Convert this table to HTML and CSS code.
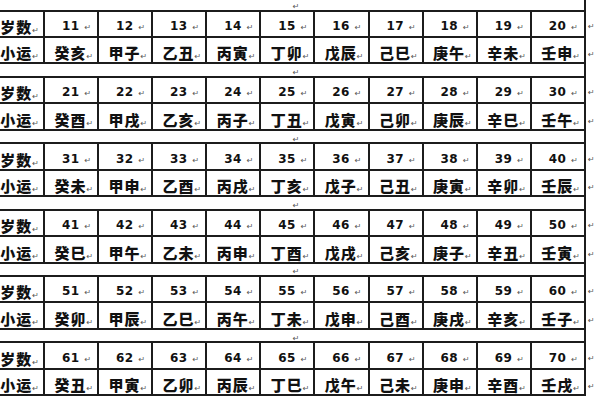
FILE: index.html
```html
<!DOCTYPE html>
<html lang="zh-CN">
<head>
<meta charset="utf-8">
<title>小运表</title>
<link rel="stylesheet" href="styles.css">
</head>
<body>
<table class="yun">
<colgroup>
<col class="c-label"><col class="c-d"><col class="c-d"><col class="c-d"><col class="c-d"><col class="c-d"><col class="c-d"><col class="c-d"><col class="c-d"><col class="c-d"><col class="c-d"><col class="c-eol">
</colgroup>
<tbody>
<tr class="gap"><td colspan="11"><span class="pm">↵</span></td><td class="eol"></td></tr>
<tr class="age"><td class="lb">岁数<span class="pm">↵</span></td><td>11<span class="pm">↵</span></td><td>12<span class="pm">↵</span></td><td>13<span class="pm">↵</span></td><td>14<span class="pm">↵</span></td><td>15<span class="pm">↵</span></td><td>16<span class="pm">↵</span></td><td>17<span class="pm">↵</span></td><td>18<span class="pm">↵</span></td><td>19<span class="pm">↵</span></td><td>20<span class="pm">↵</span></td><td class="eol"><span class="pm">↵</span></td></tr>
<tr class="luck"><td class="lb">小运<span class="pm">↵</span></td><td>癸亥<span class="pm">↵</span></td><td>甲子<span class="pm">↵</span></td><td>乙丑<span class="pm">↵</span></td><td>丙寅<span class="pm">↵</span></td><td>丁卯<span class="pm">↵</span></td><td>戊辰<span class="pm">↵</span></td><td>己巳<span class="pm">↵</span></td><td>庚午<span class="pm">↵</span></td><td>辛未<span class="pm">↵</span></td><td>壬申<span class="pm">↵</span></td><td class="eol"><span class="pm">↵</span></td></tr>
<tr class="gap"><td colspan="11"><span class="pm">↵</span></td><td class="eol"></td></tr>
<tr class="age"><td class="lb">岁数<span class="pm">↵</span></td><td>21<span class="pm">↵</span></td><td>22<span class="pm">↵</span></td><td>23<span class="pm">↵</span></td><td>24<span class="pm">↵</span></td><td>25<span class="pm">↵</span></td><td>26<span class="pm">↵</span></td><td>27<span class="pm">↵</span></td><td>28<span class="pm">↵</span></td><td>29<span class="pm">↵</span></td><td>30<span class="pm">↵</span></td><td class="eol"><span class="pm">↵</span></td></tr>
<tr class="luck"><td class="lb">小运<span class="pm">↵</span></td><td>癸酉<span class="pm">↵</span></td><td>甲戌<span class="pm">↵</span></td><td>乙亥<span class="pm">↵</span></td><td>丙子<span class="pm">↵</span></td><td>丁丑<span class="pm">↵</span></td><td>戊寅<span class="pm">↵</span></td><td>己卯<span class="pm">↵</span></td><td>庚辰<span class="pm">↵</span></td><td>辛巳<span class="pm">↵</span></td><td>壬午<span class="pm">↵</span></td><td class="eol"><span class="pm">↵</span></td></tr>
<tr class="gap"><td colspan="11"><span class="pm">↵</span></td><td class="eol"></td></tr>
<tr class="age"><td class="lb">岁数<span class="pm">↵</span></td><td>31<span class="pm">↵</span></td><td>32<span class="pm">↵</span></td><td>33<span class="pm">↵</span></td><td>34<span class="pm">↵</span></td><td>35<span class="pm">↵</span></td><td>36<span class="pm">↵</span></td><td>37<span class="pm">↵</span></td><td>38<span class="pm">↵</span></td><td>39<span class="pm">↵</span></td><td>40<span class="pm">↵</span></td><td class="eol"><span class="pm">↵</span></td></tr>
<tr class="luck"><td class="lb">小运<span class="pm">↵</span></td><td>癸未<span class="pm">↵</span></td><td>甲申<span class="pm">↵</span></td><td>乙酉<span class="pm">↵</span></td><td>丙戌<span class="pm">↵</span></td><td>丁亥<span class="pm">↵</span></td><td>戊子<span class="pm">↵</span></td><td>己丑<span class="pm">↵</span></td><td>庚寅<span class="pm">↵</span></td><td>辛卯<span class="pm">↵</span></td><td>壬辰<span class="pm">↵</span></td><td class="eol"><span class="pm">↵</span></td></tr>
<tr class="gap"><td colspan="11"><span class="pm">↵</span></td><td class="eol"></td></tr>
<tr class="age"><td class="lb">岁数<span class="pm">↵</span></td><td>41<span class="pm">↵</span></td><td>42<span class="pm">↵</span></td><td>43<span class="pm">↵</span></td><td>44<span class="pm">↵</span></td><td>45<span class="pm">↵</span></td><td>46<span class="pm">↵</span></td><td>47<span class="pm">↵</span></td><td>48<span class="pm">↵</span></td><td>49<span class="pm">↵</span></td><td>50<span class="pm">↵</span></td><td class="eol"><span class="pm">↵</span></td></tr>
<tr class="luck"><td class="lb">小运<span class="pm">↵</span></td><td>癸巳<span class="pm">↵</span></td><td>甲午<span class="pm">↵</span></td><td>乙未<span class="pm">↵</span></td><td>丙申<span class="pm">↵</span></td><td>丁酉<span class="pm">↵</span></td><td>戊戌<span class="pm">↵</span></td><td>己亥<span class="pm">↵</span></td><td>庚子<span class="pm">↵</span></td><td>辛丑<span class="pm">↵</span></td><td>壬寅<span class="pm">↵</span></td><td class="eol"><span class="pm">↵</span></td></tr>
<tr class="gap"><td colspan="11"><span class="pm">↵</span></td><td class="eol"></td></tr>
<tr class="age"><td class="lb">岁数<span class="pm">↵</span></td><td>51<span class="pm">↵</span></td><td>52<span class="pm">↵</span></td><td>53<span class="pm">↵</span></td><td>54<span class="pm">↵</span></td><td>55<span class="pm">↵</span></td><td>56<span class="pm">↵</span></td><td>57<span class="pm">↵</span></td><td>58<span class="pm">↵</span></td><td>59<span class="pm">↵</span></td><td>60<span class="pm">↵</span></td><td class="eol"><span class="pm">↵</span></td></tr>
<tr class="luck"><td class="lb">小运<span class="pm">↵</span></td><td>癸卯<span class="pm">↵</span></td><td>甲辰<span class="pm">↵</span></td><td>乙巳<span class="pm">↵</span></td><td>丙午<span class="pm">↵</span></td><td>丁未<span class="pm">↵</span></td><td>戊申<span class="pm">↵</span></td><td>己酉<span class="pm">↵</span></td><td>庚戌<span class="pm">↵</span></td><td>辛亥<span class="pm">↵</span></td><td>壬子<span class="pm">↵</span></td><td class="eol"><span class="pm">↵</span></td></tr>
<tr class="gap"><td colspan="11"><span class="pm">↵</span></td><td class="eol"></td></tr>
<tr class="age"><td class="lb">岁数<span class="pm">↵</span></td><td>61<span class="pm">↵</span></td><td>62<span class="pm">↵</span></td><td>63<span class="pm">↵</span></td><td>64<span class="pm">↵</span></td><td>65<span class="pm">↵</span></td><td>66<span class="pm">↵</span></td><td>67<span class="pm">↵</span></td><td>68<span class="pm">↵</span></td><td>69<span class="pm">↵</span></td><td>70<span class="pm">↵</span></td><td class="eol"><span class="pm">↵</span></td></tr>
<tr class="luck"><td class="lb">小运<span class="pm">↵</span></td><td>癸丑<span class="pm">↵</span></td><td>甲寅<span class="pm">↵</span></td><td>乙卯<span class="pm">↵</span></td><td>丙辰<span class="pm">↵</span></td><td>丁巳<span class="pm">↵</span></td><td>戊午<span class="pm">↵</span></td><td>己未<span class="pm">↵</span></td><td>庚申<span class="pm">↵</span></td><td>辛酉<span class="pm">↵</span></td><td>壬戌<span class="pm">↵</span></td><td class="eol"><span class="pm">↵</span></td></tr>
</tbody>
</table>
</body>
</html>
```

FILE: styles.css
```css
html, body {
  margin: 0;
  padding: 0;
  background: #ffffff;
  overflow: hidden;
}

.yun {
  border-collapse: collapse;
  table-layout: fixed;
  width: 606px;
  margin: -4px 0 0 -8px;
  color: #111111;
}

.c-label { width: 51px; }
.c-d { width: 54.1px; }
.c-eol { width: 14px; }

.yun td {
  border: 2px solid #1c1c1c;
  padding: 0 4px 1px 0;
  text-align: right;
  vertical-align: bottom;
  white-space: nowrap;
  overflow: hidden;
  line-height: 16px;
}

.age { height: 26.4px; }
.luck { height: 26.4px; }
.gap { height: 13.6px; }

.age td {
  font-family: "DejaVu Sans", sans-serif;
  font-weight: 700;
  font-size: 12px;
  letter-spacing: 0.4px;
  padding-right: 6px;
  padding-bottom: 2px;
}

.luck td,
.age td.lb {
  font-family: "Noto Sans CJK SC", sans-serif;
  font-weight: 900;
  font-size: 15px;
  letter-spacing: 1px;
  padding-bottom: 1px;
}

.age td.lb,
.luck td.lb {
  padding-right: 4px;
}

.age td .pm {
  margin-left: 5px;
}

.age td.lb .pm,
.luck td .pm {
  margin-left: 0;
}

.gap td {
  text-align: center;
  vertical-align: middle;
  padding: 0 0 0 14px;
  line-height: 8px;
}

.yun td.eol {
  border: none;
  text-align: left;
  padding: 0 0 4px 2px;
}

.yun td.eol .pm {
  margin-left: 0;
}

.pm {
  font-family: "DejaVu Sans", sans-serif;
  font-weight: 400;
  font-size: 8px;
  line-height: 0;
  color: #555555;
  letter-spacing: 0;
}
```
